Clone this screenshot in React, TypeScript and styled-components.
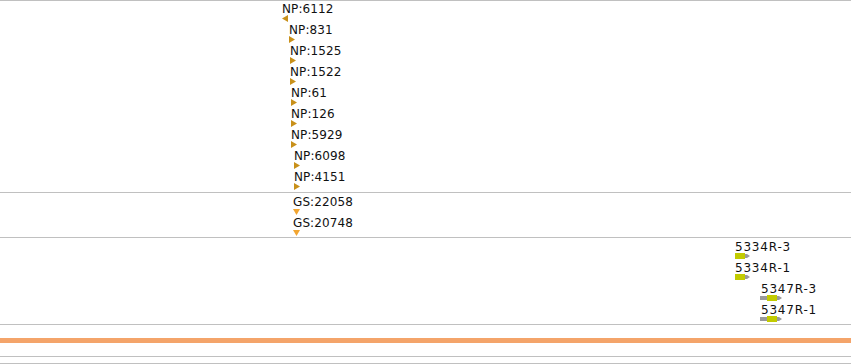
import styled, { createGlobalStyle } from 'styled-components';

const GlobalStyle = createGlobalStyle`
  html, body { margin: 0; padding: 0; background: #fff; }
  body { font-family: "DejaVu Sans", Verdana, sans-serif; }
`;

type Glyph = 'left' | 'right' | 'down' | 'gene' | 'geneUtr';

interface Feature {
  label: string;
  x: number;
  y: number;
  glyph: Glyph;
  gx?: number;
}

const npFeatures: Feature[] = [
  { label: 'NP:6112', x: 282, y: 0, glyph: 'left' },
  { label: 'NP:831', x: 289, y: 21, glyph: 'right' },
  { label: 'NP:1525', x: 290, y: 42, glyph: 'right' },
  { label: 'NP:1522', x: 290, y: 63, glyph: 'right' },
  { label: 'NP:61', x: 291, y: 84, glyph: 'right' },
  { label: 'NP:126', x: 291, y: 105, glyph: 'right' },
  { label: 'NP:5929', x: 291, y: 126, glyph: 'right' },
  { label: 'NP:6098', x: 294, y: 147, glyph: 'right' },
  { label: 'NP:4151', x: 294, y: 168, glyph: 'right' },
];

const gsFeatures: Feature[] = [
  { label: 'GS:22058', x: 293, y: 1, glyph: 'down' },
  { label: 'GS:20748', x: 293, y: 22, glyph: 'down' },
];

const geneFeatures: Feature[] = [
  { label: '5334R-3', x: 735, y: 1, glyph: 'gene' },
  { label: '5334R-1', x: 735, y: 22, glyph: 'gene' },
  { label: '5347R-3', x: 761, y: 43, glyph: 'geneUtr', gx: 760 },
  { label: '5347R-1', x: 761, y: 64, glyph: 'geneUtr', gx: 760 },
];

function Marker({ glyph }: { glyph: Glyph }) {
  if (glyph === 'left') {
    return (
      <svg width="6" height="7" viewBox="0 0 6 7">
        <polygon points="0,3.5 6,0 6,7" fill="#c8901a" />
      </svg>
    );
  }
  if (glyph === 'right') {
    return (
      <svg width="6" height="7" viewBox="0 0 6 7">
        <polygon points="0,0 6,3.5 0,7" fill="#c8901a" />
      </svg>
    );
  }
  if (glyph === 'down') {
    return (
      <svg width="7" height="6" viewBox="0 0 7 6">
        <polygon points="0,0 7,0 3.5,6" fill="#f2a530" />
      </svg>
    );
  }
  if (glyph === 'gene') {
    return (
      <svg width="15" height="6" viewBox="0 0 15 6">
        <rect x="0" y="0" width="10" height="6" fill="#c2cb00" />
        <polygon points="10,1 12,1 15,3 12,5 10,5" fill="#9a9a9a" />
      </svg>
    );
  }
  return (
    <svg width="22" height="6" viewBox="0 0 22 6">
      <rect x="0" y="1" width="7" height="4" fill="#9a9a9a" />
      <rect x="7" y="0" width="10" height="6" fill="#c2cb00" />
      <polygon points="17,1 19,1 22,3 19,5 17,5" fill="#9a9a9a" />
    </svg>
  );
}

function FeatureItem({ f, wide = false }: { f: Feature; wide?: boolean }) {
  return (
    <Item style={{ left: f.x, top: f.y }}>
      <Label $wide={wide}>{f.label}</Label>
      <GlyphBox $down={f.glyph === 'down'} $shift={f.gx !== undefined ? f.gx - f.x : 0}>
        <Marker glyph={f.glyph} />
      </GlyphBox>
    </Item>
  );
}

export default function App() {
  return (
    <>
      <GlobalStyle />
      <View>
        <Track $h={192}>
          {npFeatures.map((f) => <FeatureItem key={f.label} f={f} />)}
        </Track>
        <Track $h={45}>
          {gsFeatures.map((f) => <FeatureItem key={f.label} f={f} />)}
        </Track>
        <Track $h={87}>
          {geneFeatures.map((f) => <FeatureItem key={f.label} f={f} wide />)}
        </Track>
        <Track $h={14} />
        <Highlight />
        <Gap />
        <Rule />
        <Gap $h={6} />
        <Rule />
      </View>
    </>
  );
}

const View = styled.div`
  width: 851px;
  height: 364px;
  overflow: hidden;
  display: flex;
  flex-direction: column;
`;

const Track = styled.div<{ $h: number }>`
  position: relative;
  height: ${({ $h }) => $h}px;
  border-top: 1px solid #c0c0c0;
  box-sizing: border-box;
  flex-shrink: 0;
`;

const Item = styled.div`
  position: absolute;
  display: flex;
  flex-direction: column;
  align-items: flex-start;
`;

const Label = styled.div<{ $wide: boolean }>`
  height: 14px;
  font-size: 12px;
  line-height: 16px;
  letter-spacing: ${({ $wide }) => ($wide ? '0.8px' : '0.1px')};
  color: #111;
  white-space: nowrap;
`;

const GlyphBox = styled.div<{ $down: boolean; $shift: number }>`
  display: flex;
  margin-top: ${({ $down }) => ($down ? 1 : 0)}px;
  margin-left: ${({ $shift }) => $shift}px;
  line-height: 0;
`;

const Highlight = styled.div`
  height: 5px;
  background: #f4a46a;
  flex-shrink: 0;
`;

const Gap = styled.div<{ $h?: number }>`
  height: ${({ $h }) => $h ?? 13}px;
  flex-shrink: 0;
`;

const Rule = styled.div`
  height: 1px;
  background: #c0c0c0;
  flex-shrink: 0;
`;
